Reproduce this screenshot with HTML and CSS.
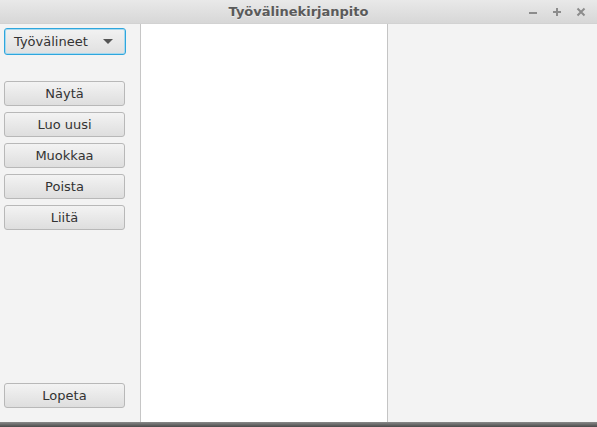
FILE: index.html
```html
<!DOCTYPE html>
<html>
<head>
<meta charset="utf-8">
<link rel="stylesheet" href="styles.css">
</head>
<body>
<div class="window">
  <div class="titlebar">
    <span class="title">Työvälinekirjanpito</span>
    <div class="controls">
      <svg width="10" height="10" viewBox="0 0 10 10"><rect x="1" y="5" width="8" height="2" fill="#8c8c8c"/></svg>
      <svg width="10" height="10" viewBox="0 0 10 10"><rect x="1" y="4" width="8" height="2" fill="#8c8c8c"/><rect x="4" y="1" width="2" height="8" fill="#8c8c8c"/></svg>
      <svg width="10" height="10" viewBox="0 0 10 10"><path d="M1.5 1.5 L8.5 8.5 M8.5 1.5 L1.5 8.5" stroke="#8c8c8c" stroke-width="2"/></svg>
    </div>
  </div>
  <div class="main">
    <div class="sidebar">
      <div class="combo">
        <span class="combo-label">Työvälineet</span>
        <span class="arrow"></span>
      </div>
      <div class="actions">
        <button class="btn">Näytä</button>
        <button class="btn">Luo uusi</button>
        <button class="btn">Muokkaa</button>
        <button class="btn">Poista</button>
        <button class="btn">Liitä</button>
      </div>
      <div class="spacer"></div>
      <button class="btn">Lopeta</button>
    </div>
    <div class="list"></div>
    <div class="detail"></div>
  </div>
  <div class="bottom"></div>
</div>
</body>
</html>
```
FILE: styles.css
```css
html, body {
  margin: 0;
  padding: 0;
  width: 597px;
  height: 427px;
  overflow: hidden;
  background: #f3f3f3;
  font-family: "DejaVu Sans", sans-serif;
}
.window {
  display: flex;
  flex-direction: column;
  width: 597px;
  height: 427px;
}
.titlebar {
  position: relative;
  height: 24px;
  flex: none;
  background: linear-gradient(#e9e9e9, #d7d7d7);
  display: flex;
  align-items: center;
  justify-content: center;
  box-sizing: border-box;
  border-bottom: 1px solid #d2d2d2;
}
.title {
  font-weight: bold;
  font-size: 13px;
  color: #5a5a5a;
  text-shadow: 0 1px 0 rgba(255,255,255,0.5);
}
.controls {
  position: absolute;
  right: 11px;
  top: 7px;
  display: flex;
  gap: 14px;
}
.controls svg { display: block; }
.main {
  flex: 1;
  display: flex;
  min-height: 0;
}
.sidebar {
  width: 141px;
  flex: none;
  box-sizing: border-box;
  border-right: 1px solid #c6c6c6;
  background: #f3f3f3;
  display: flex;
  flex-direction: column;
  padding: 4px 0 14px 4px;
}
.combo {
  width: 122px;
  height: 27px;
  box-sizing: border-box;
  border: 1px solid #2ea6dd;
  border-radius: 3px;
  box-shadow: inset 0 0 0 1px #a6d9ef;
  background: linear-gradient(#f2f2f2, #e0e0e0);
  display: flex;
  align-items: center;
  justify-content: space-between;
  padding: 0 12px 0 9px;
  font-size: 13px;
  color: #333;
}
.arrow {
  width: 0;
  height: 0;
  border-left: 5px solid transparent;
  border-right: 5px solid transparent;
  border-top: 5px solid #555;
}
.actions {
  margin-top: 26px;
  display: flex;
  flex-direction: column;
  gap: 6px;
}
.btn {
  width: 121px;
  height: 25px;
  box-sizing: border-box;
  border: 1px solid #b8b8b8;
  border-radius: 3px;
  background: linear-gradient(#f3f3f3, #dedede);
  font-family: "DejaVu Sans", sans-serif;
  font-size: 13px;
  color: #333;
  padding: 0;
  margin: 0;
  text-align: center;
}
.spacer { flex: 1; }
.list {
  width: 247px;
  flex: none;
  background: #fff;
  box-sizing: border-box;
  border-right: 1px solid #c4c4c4;
}
.detail {
  flex: 1;
  background: #f3f3f3;
}
.bottom {
  height: 5px;
  flex: none;
  background: linear-gradient(#8a8a8a, #4a4a4a);
}
```
